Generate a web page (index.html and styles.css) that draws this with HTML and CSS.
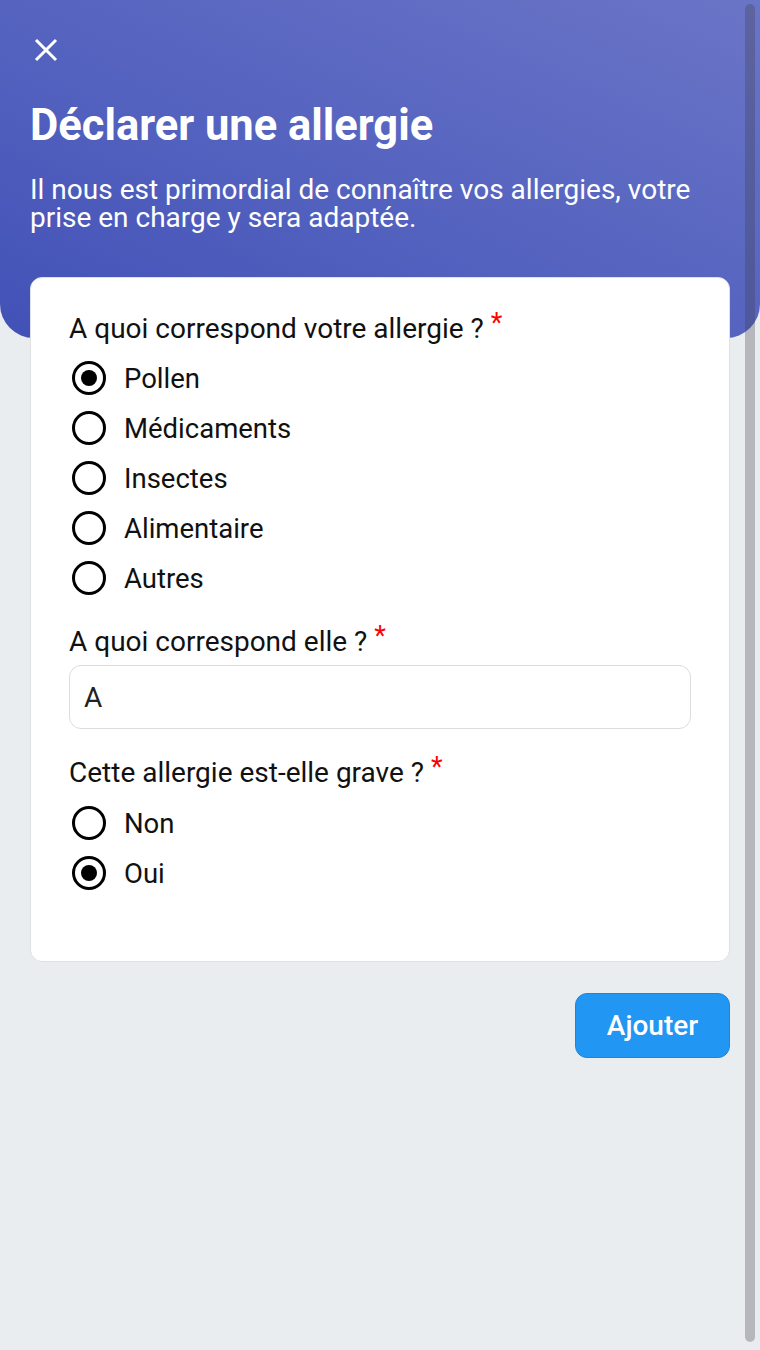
FILE: index.html
```html
<!DOCTYPE html>
<html lang="fr">
<head>
    <meta charset="UTF-8">
    <meta name="viewport" content="width=device-width, initial-scale=1.0">
    <title>Déclarer une allergie</title>
    <link rel="stylesheet" href="styles.css">
</head>
<body>
    <div class="screen">
        <header class="header">
            <button class="close-button" aria-label="Fermer">
                <svg width="24" height="24" viewBox="0 0 24 24">
                    <path d="M2 2 L22 22 M22 2 L2 22" stroke="white" stroke-width="3" fill="none"/>
                </svg>
            </button>
            <h1 class="title">Déclarer une allergie</h1>
            <p class="subtitle">Il nous est primordial de connaître vos allergies, votre prise en charge y sera adaptée.</p>
        </header>

        <div class="content">
            <form class="card">
                <div class="field">
                    <div class="field-label">A quoi correspond votre allergie ? <span class="required">*</span></div>
                    <div class="radio-list">
                        <label class="radio"><span class="dot checked"></span>Pollen</label>
                        <label class="radio"><span class="dot"></span>Médicaments</label>
                        <label class="radio"><span class="dot"></span>Insectes</label>
                        <label class="radio"><span class="dot"></span>Alimentaire</label>
                        <label class="radio"><span class="dot"></span>Autres</label>
                    </div>
                </div>

                <div class="field field-text">
                    <div class="field-label">A quoi correspond elle ? <span class="required">*</span></div>
                    <div class="text-input">A</div>
                </div>

                <div class="field field-grave">
                    <div class="field-label">Cette allergie est-elle grave ? <span class="required">*</span></div>
                    <div class="radio-list">
                        <label class="radio"><span class="dot"></span>Non</label>
                        <label class="radio"><span class="dot checked"></span>Oui</label>
                    </div>
                </div>
            </form>

            <div class="actions">
                <button class="add-button">Ajouter</button>
            </div>
        </div>

        <div class="scrollbar"></div>
    </div>
</body>
</html>
```

FILE: styles.css
```css
body {
    margin: 0;
    background-color: #eaedf0;
    font-family: Roboto, "Noto Sans", sans-serif;
    color: #111;
}
.screen {
    position: relative;
    width: 760px;
    height: 1350px;
    overflow: hidden;
}

/* Header */
.header {
    height: 338px;
    box-sizing: border-box;
    padding: 36px 30px 0 30px;
    background: linear-gradient(to top right, #4151b6 0%, #5664c0 50%, #6b75c7 100%);
    border-radius: 0 0 34px 34px;
    color: white;
}
.close-button {
    background: none;
    border: none;
    padding: 0;
    margin-left: 4px;
    width: 24px;
    height: 30px;
    display: block;
    cursor: pointer;
}
.title {
    margin: 34px 0 0 0;
    font-size: 43.5px;
    font-weight: 700;
    line-height: 52px;
    letter-spacing: 0;
}
.subtitle {
    margin: 24px 0 0 0;
    font-size: 28px;
    line-height: 28px;
    font-weight: 400;
    padding-right: 20px;
}

/* Card */
.content {
    margin-top: -61px;
    padding: 0 30px;
}
.card {
    background: white;
    border: 1px solid #dfe1e4;
    border-radius: 12px;
    padding: 33px 38px 63px 38px;
    display: flex;
    flex-direction: column;
}
.field-label {
    font-size: 28px;
    line-height: 36px;
    color: #111;
}
.required {
    color: #ff0000;
    font-size: 27px;
    position: relative;
    top: -6px;
}
.field-text {
    margin-top: 21px;
}
.field-grave {
    margin-top: 26px;
}
.radio-list {
    display: flex;
    flex-direction: column;
    margin-top: 6px;
}
.field-grave .radio-list {
    margin-top: 7px;
}
.radio {
    display: flex;
    align-items: center;
    height: 50px;
    font-size: 27.5px;
    gap: 18px;
    padding-left: 3px;
}
.dot {
    width: 28px;
    height: 28px;
    border: 3px solid #000;
    border-radius: 50%;
    display: flex;
    align-items: center;
    justify-content: center;
}
.dot.checked::after {
    content: "";
    width: 16px;
    height: 16px;
    border-radius: 50%;
    background: #000;
}
.text-input {
    margin-top: 5px;
    height: 64px;
    border: 1.5px solid #dcdddf;
    border-radius: 12px;
    box-sizing: border-box;
    padding: 0 14px;
    display: flex;
    align-items: center;
    font-size: 28px;
    color: #222;
}

/* Button */
.actions {
    display: flex;
    justify-content: flex-end;
    margin-top: 31px;
}
.add-button {
    width: 155px;
    height: 65px;
    background: #2196f3;
    border: 1px solid #1d86dc;
    border-radius: 12px;
    color: white;
    font-family: Roboto, sans-serif;
    font-size: 28px;
    font-weight: 500;
    cursor: pointer;
}

/* overlay scrollbar */
.scrollbar {
    position: absolute;
    top: 4px;
    right: 5px;
    width: 10px;
    height: 1338px;
    border-radius: 5px;
    background: rgba(60, 60, 70, 0.3);
}
```
